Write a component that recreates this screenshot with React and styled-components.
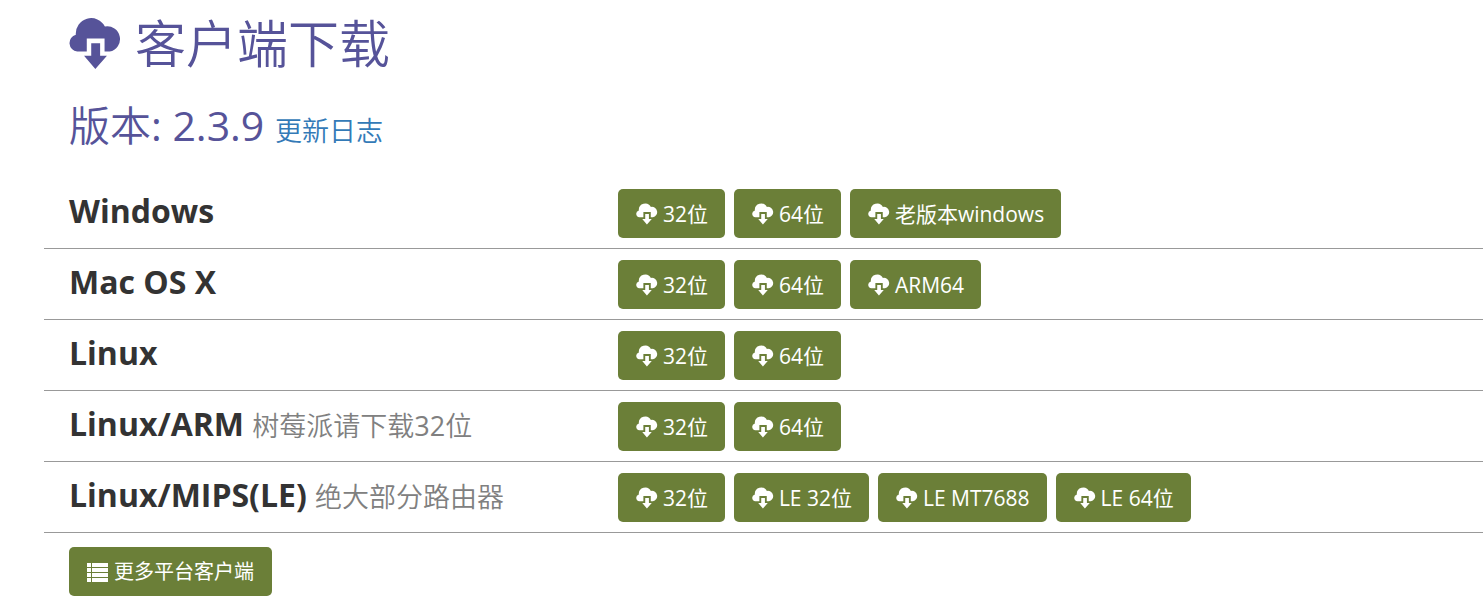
import React from "react";
import styled, { createGlobalStyle } from "styled-components";

const GlobalStyle = createGlobalStyle`
  * { box-sizing: border-box; }
  body {
    margin: 0;
    background: #fff;
    color: #333;
    font-family: "Open Sans", "Noto Sans CJK SC", sans-serif;
    font-size: 21px;
    overflow-x: hidden;
  }
`;

const Page = styled.main`
  padding: 12px 0 5px 44px;
`;

const Title = styled.h1`
  display: flex;
  align-items: center;
  gap: 13px;
  margin: 0 0 22px;
  padding-left: 25px;
  color: #565399;
  font-size: 51px;
  font-weight: 350;
  line-height: 62px;
`;

const Version = styled.h2`
  margin: 0 0 18px;
  padding-left: 25px;
  color: #565399;
  font-size: 41px;
  font-weight: 350;
  line-height: 58px;
`;

const Latin = styled.span`
  font-weight: 400;
`;

const LogLink = styled.a`
  color: #337ab7;
  font-size: 27px;
  text-decoration: none;
`;

const Row = styled.section`
  display: grid;
  grid-template-columns: 37fr 60fr;
  padding: 11px 0 10px;
  border-bottom: 1px solid #999;
`;

const Platform = styled.h3`
  margin: 0;
  padding-left: 25px;
  font-size: 32px;
  font-weight: 700;
  line-height: 44px;
`;

const Note = styled.small`
  color: #808080;
  font-size: 27px;
  font-weight: 350;
`;

const Downloads = styled.div`
  display: flex;
  flex-wrap: wrap;
  gap: 9px;
  padding-left: 25px;
`;

const Button = styled.a`
  display: inline-flex;
  align-items: center;
  gap: 5px;
  height: 49px;
  padding: 0 17px 0 18px;
  border-radius: 5px;
  background: #6b7f38;
  color: #fff;
  font-size: 21px;
  line-height: 28px;
  text-decoration: none;
  white-space: nowrap;
`;

const MoreButton = styled(Button)`
  padding: 0 18px;
  font-size: 20px;
`;

const More = styled.div`
  padding: 14px 25px 0;
`;

const Icon = styled.svg`
  flex: none;
  width: ${(p) => p.$size}px;
  height: ${(p) => p.$size}px;
  fill: currentColor;
`;

const CloudDownload = ({ size = 22 }) => (
  <Icon $size={size} viewBox="26 25 155 155" aria-hidden="true">
    <path d="M78 126H50A25 25 0 0 1 46 77A45 45 0 0 1 131 53A37 37 0 1 1 145 126H130V88H78Z" />
    <path d="M91 102H117V138H137L103 177L70 138H91Z" />
  </Icon>
);

const ListIcon = () => (
  <Icon $size={22} viewBox="0 0 22 22" aria-hidden="true">
    {[2, 7, 12, 17].map((y) => (
      <path key={y} d={`M0 ${y}h4v4h-4zM5 ${y}h16v4h-16z`} />
    ))}
  </Icon>
);

const platforms = [
  { name: "Windows", files: ["32位", "64位", "老版本windows"] },
  { name: "Mac OS X", files: ["32位", "64位", "ARM64"] },
  { name: "Linux", files: ["32位", "64位"] },
  {
    name: "Linux/ARM",
    note: (
      <>
        树莓派请下载<Latin>32</Latin>位
      </>
    ),
    files: ["32位", "64位"],
  },
  {
    name: "Linux/MIPS(LE)",
    note: "绝大部分路由器",
    files: ["32位", "LE 32位", "LE MT7688", "LE 64位"],
  },
];

export default function App() {
  return (
    <>
      <GlobalStyle />
      <Page>
        <Title>
          <CloudDownload size={53} />
          客户端下载
        </Title>
        <Version>
          版本<Latin>: 2.3.9 </Latin>
          <LogLink href="#log">更新日志</LogLink>
        </Version>
        {platforms.map(({ name, note, files }) => (
          <Row key={name}>
            <Platform>
              {name} {note && <Note>{note}</Note>}
            </Platform>
            <Downloads>
              {files.map((file) => (
                <Button key={file} href="#download">
                  <CloudDownload />
                  {file}
                </Button>
              ))}
            </Downloads>
          </Row>
        ))}
        <More>
          <MoreButton href="#more">
            <ListIcon />
            更多平台客户端
          </MoreButton>
        </More>
      </Page>
    </>
  );
}
